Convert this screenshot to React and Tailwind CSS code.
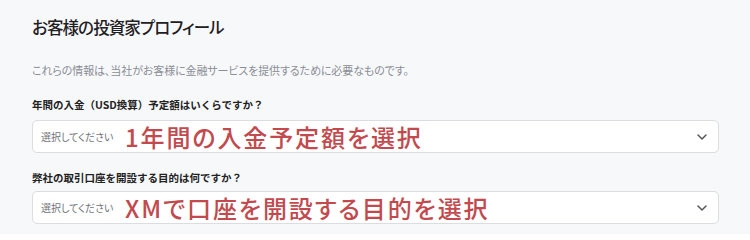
import React from "react";

const jp = "font-['Noto_Sans_CJK_JP','Noto_Sans',sans-serif]";

function Chevron() {
  return (
    <svg width="10" height="6" viewBox="0 0 10 6" className="shrink-0">
      <polyline points="1,1 5,5 9,1" fill="none" stroke="#555" strokeWidth="1.5" strokeLinecap="round" strokeLinejoin="round" />
    </svg>
  );
}

function SelectBox({ hint }) {
  return (
    <div className="flex h-[33px] items-center rounded-[5px] border border-[#dcdde0] bg-white pl-[8px] pr-[11px]">
      <span className="w-[84px] shrink-0 text-[10px] leading-none text-[#6f7277] [font-feature-settings:'palt']">選択してください</span>
      <span className="flex-1 text-[24px] font-medium leading-none tracking-[1.9px] text-[#c24a4e] [font-feature-settings:'palt']">{hint}</span>
      <Chevron />
    </div>
  );
}

export default function App() {
  return (
    <div className={`${jp} h-[234px] w-[750px] overflow-hidden bg-[#f7f8fa] pl-8 pr-[31px]`}>
      <h1 className="pt-[14px] text-[16.5px] font-medium leading-[26px] tracking-[-0.9px] text-[#1f2023] [font-feature-settings:'palt']">お客様の投資家プロフィール</h1>
      <p className="mt-[21px] text-[11px] leading-[18px] tracking-[-0.1px] text-[#8a8e95] [font-feature-settings:'palt']">
        これらの情報は、当社がお客様に金融サービスを提供するために必要なものです。
      </p>
      <div className="mt-[18px] text-[10.5px] font-bold leading-[16px] text-[#222]">年間の入金（USD換算）予定額はいくらですか？</div>
      <div className="mt-[7px]">
        <SelectBox hint="1年間の入金予定額を選択" />
      </div>
      <div className="mt-[17px] text-[10.5px] font-bold leading-[16px] text-[#222]">弊社の取引口座を開設する目的は何ですか？</div>
      <div className="mt-[5px]">
        <SelectBox hint="XMで口座を開設する目的を選択" />
      </div>
    </div>
  );
}
